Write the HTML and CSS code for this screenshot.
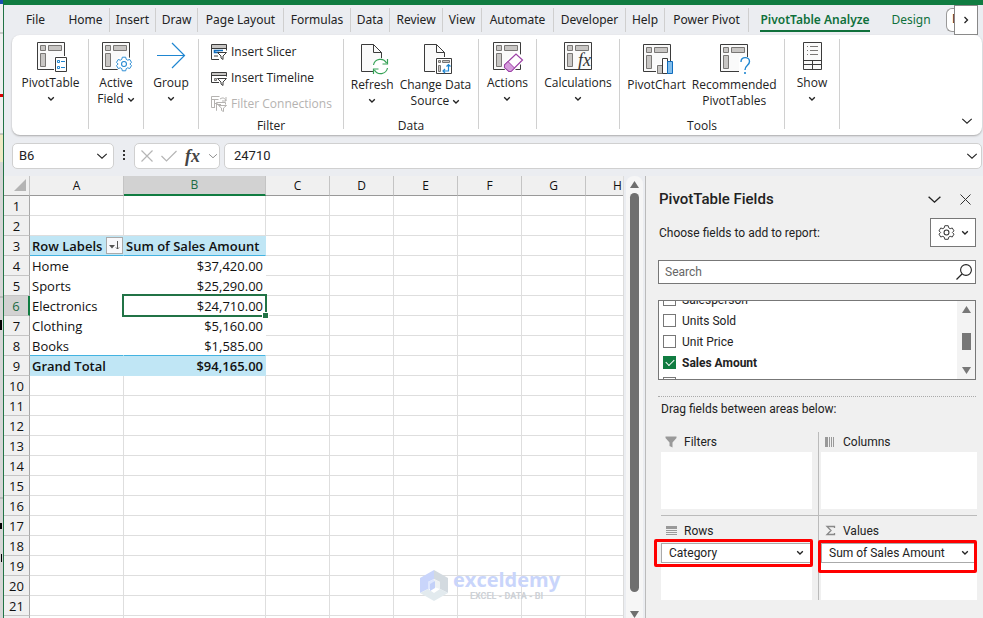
FILE: index.html
```html
<!doctype html>
<html lang="en">
<head>
<meta charset="utf-8">
<title>PivotTable Analyze</title>
<link rel="stylesheet" href="styles.css">
</head>

<body>
<!-- shared icons -->
<svg class="defs" width="0" height="0" aria-hidden="true">
	<symbol id="chev" viewBox="0 0 8 6"><path d="M1.2 1.2 4 4 6.800 1.200" fill="none" stroke="#222" stroke-width="1.300"/></symbol>
	<symbol id="chev-big" viewBox="0 0 14 8"><path d="M1.500 1.500 7 6.500 12.500 1.500" fill="none" stroke="currentColor" stroke-width="1.300"/></symbol>
	<symbol id="pivot" viewBox="0 0 32 32">
		<path d="M1.500 1.500h27v27h-27z" fill="#fafafa" stroke="#3b3b3b"/>
		<path d="M4.500 4.500h5v5h-5zM12.500 4.500h13v5h-13zM4.500 12.500h5v13h-5z" fill="#c8c6c4" stroke="#797775"/>
	</symbol>
	<symbol id="page" viewBox="0 0 32 32">
		<path d="M4.500 1.500h12l8 8v19h-20z" fill="#fafafa" stroke="#3b3b3b"/>
		<path d="M16.500 1.500v8h8" fill="none" stroke="#3b3b3b"/>
	</symbol>
	<symbol id="gear" viewBox="0 0 18 18">
		<path d="M7 1h4l.6 2.500 1.700 1 2.500-.8 2 3.400-1.900 1.900 1.900 1.900-2 3.400-2.500-.8-1.700 1L11 17H7l-.6-2.500-1.700-1-2.500.8-2-3.400L2.100 9 .2 7.100l2-3.400 2.500.8 1.700-1z" fill="#fff" stroke="currentColor" stroke-width="1.100" transform="translate(.9 .9) scale(.9)"/>
		<circle cx="9" cy="9" r="2.600" fill="none" stroke="currentColor" stroke-width="1.100"/>
	</symbol>
	<symbol id="funnel" viewBox="0 0 12 12"><path d="M.5.500h11v1.500L7.500 6.500v5l-3-1.500V6.500L.5 2z"/></symbol>
</svg>

<div class="screen">
	<!-- window behind -->
	<svg class="behind" width="3" height="618" viewBox="0 0 3 618" aria-hidden="true">
		<path d="M0 0h3v618H0z" fill="#d6d6d6"/>
		<path d="M0 4h3v130H0z" fill="#f0f0f0"/>
		<path d="M0 0h3v4H0z" fill="#1d4eb0"/>
		<path d="M0 94h3v3H0z" fill="#d90000"/>
		<path d="M0 134h3v28H0z" fill="#efe9c4"/>
		<path d="M0 33h3M0 134h3M0 297h3M0 498h3" stroke="#a0a0a0"/>
		<path d="M0 320h2v10H0zM0 523h2v6H0zM1 554h1v8H1z"/>
	</svg>

	<div class="app">
		<nav class="tabs">
			<a href="#" class="tab">File</a>
			<a href="#" class="tab line">Home</a>
			<a href="#" class="tab line">Insert</a>
			<a href="#" class="tab line">Draw</a>
			<a href="#" class="tab line">Page Layout</a>
			<a href="#" class="tab line">Formulas</a>
			<a href="#" class="tab line">Data</a>
			<a href="#" class="tab line">Review</a>
			<a href="#" class="tab line">View</a>
			<a href="#" class="tab line">Automate</a>
			<a href="#" class="tab line">Developer</a>
			<a href="#" class="tab line">Help</a>
			<a href="#" class="tab line">Power Pivot</a>
			<a href="#" class="tab active">PivotTable Analyze</a>
			<a href="#" class="tab green">Design</a>
			<div class="more">
				<span class="more-cut">D</span>
				<button class="more-btn" aria-label="Scroll tabs"><svg width="6" height="8" viewBox="0 0 6 8"><path d="M1.500 1 4.500 4l-3 3" fill="none" stroke="#222" stroke-width="1.300"/></svg></button>
			</div>
		</nav>

		<div class="ribbon">
			<div class="group">
				<button class="big">
					<svg width="32" height="32" viewBox="0 0 32 32"><use href="#pivot"/><path d="M18 15h14v17H18z" fill="#fff"/><path d="M19.500 16.500h11v14h-11z" fill="#fff" stroke="#3b3b3b"/><path d="M21.500 19.500h2v2h-2zM21.500 25.500h2v2h-2zM25 20.500h4M25 26.500h4" fill="none" stroke="#1f86d1"/></svg>
					<span>PivotTable</span>
					<svg class="chev"><use href="#chev"/></svg>
				</button>
			</div>
			<div class="group">
				<button class="big">
					<svg width="32" height="32" viewBox="0 0 32 32"><use href="#pivot"/><circle cx="23" cy="23" r="8.500" fill="#fff"/><use href="#gear" x="14.500" y="14.500" width="17" height="17" color="#1f86d1"/></svg>
					<span>Active<br>Field <svg class="chev"><use href="#chev"/></svg></span>
				</button>
			</div>
			<div class="group">
				<button class="big">
					<svg width="32" height="32" viewBox="0 0 32 32"><path d="M1 14.500h27M16 2l12.500 12.500L16 27" fill="none" stroke="#1f86d1" stroke-width="1.200"/></svg>
					<span>Group</span>
					<svg class="chev"><use href="#chev"/></svg>
				</button>
			</div>
			<div class="group filter">
				<button class="small">
					<svg width="16" height="16" viewBox="0 0 16 16"><path d="M.5.500h15v15H.5z" fill="#fff"/><path d="M8 15.500H.5V.5h15v6" fill="none" stroke="#3b3b3b"/><path d="M1 1h14v3H1z" fill="#c8c6c4"/><path d="M.5 4.500h15" stroke="#3b3b3b"/><path d="M12 6.500H3.500v2H8" fill="none" stroke="#0f6cbd" stroke-width="1.600"/><path d="M3 11h4v2H3z" fill="#a19f9d"/><path d="M6.500 8.500h9L12 12v3.500L10 14v-2z" fill="#fff" stroke="#3b3b3b"/></svg>
					Insert Slicer
				</button>
				<button class="small">
					<svg width="16" height="16" viewBox="0 0 16 16"><path d="M8 12.500H.5v-10h15v4" fill="#fff" stroke="#3b3b3b"/><path d="M1 3h14v2H1z" fill="#c8c6c4"/><path d="M.5 5.500h15" stroke="#3b3b3b"/><path d="M3.500 8.500h2v2h-2z" fill="#c8c6c4" stroke="#797775"/><path d="M6.500 8.500h9L12 12v3.500L10 14v-2z" fill="#fff" stroke="#3b3b3b"/></svg>
					Insert Timeline
				</button>
				<button class="small" disabled>
					<svg width="16" height="16" viewBox="0 0 16 16" fill="none" stroke="#b5b3b1"><path d="M4 11.500H.5v-11h8M.5 3.500h7M3.500 3.500v8M3.500 7.500h3M9 3c3-2 5-1 6 2M15 1v4h-4M6 14.500h-.5v-8h9v2M6 8.500h4"/><path d="M7.500 9.500h8L12.500 12v3.500l-2-1V12z" fill="#fff"/></svg>
					Filter Connections
				</button>
				<span class="caption">Filter</span>
			</div>
			<div class="group data">
				<button class="big">
					<svg width="32" height="32" viewBox="0 0 32 32"><use href="#page"/><circle cx="23.500" cy="23.500" r="8.500" fill="#fff"/><path d="M16.500 22a7 7 0 0 1 13-2M30.500 25a7 7 0 0 1-13 2M30.500 16v5h-5M16.500 31v-5h5" fill="none" stroke="#36a256" stroke-width="1.200"/></svg>
					<span>Refresh</span>
					<svg class="chev"><use href="#chev"/></svg>
				</button>
				<button class="big">
					<svg width="32" height="32" viewBox="0 0 32 32"><use href="#page"/><path d="M15 14h17v18H15z" fill="#fff"/><path d="M16.500 15.500h15v15h-15z" fill="#fff" stroke="#3b3b3b"/><path d="M18.500 17.500h2v2h-2zM22.500 17.500h7v2h-7zM18.500 22.500h2v6h-2z" fill="#c8c6c4" stroke="#797775"/><path d="M28.500 22v6H23M26.500 23.500l2-2 2 2M25 26l-2 2 2 2" fill="none" stroke="#1f86d1" stroke-width="1.200"/></svg>
					<span>Change Data<br>Source <svg class="chev"><use href="#chev"/></svg></span>
				</button>
				<span class="caption">Data</span>
			</div>
			<div class="group">
				<button class="big">
					<svg width="32" height="32" viewBox="0 0 32 32"><use href="#pivot"/><path d="m10 24 14-14 8 6v4L20 32h-5z" fill="#fff"/><path d="M12.500 24 24 13l6.500 6L19 30.500h-2l-4.500-4z" fill="#fff" stroke="#9b3fa5" stroke-width="1.200"/><path d="m12.500 24 3.500-3.500 6.500 6.500-3.500 3.500h-2l-4.500-4z" fill="#d59bdc" stroke="#9b3fa5"/></svg>
					<span>Actions</span>
					<svg class="chev"><use href="#chev"/></svg>
				</button>
			</div>
			<div class="group">
				<button class="big">
					<svg width="32" height="32" viewBox="0 0 32 32"><use href="#pivot"/><path d="M13 12h15v16H13z" fill="#fafafa"/><text x="15" y="25" class="fx">fx</text></svg>
					<span>Calculations</span>
					<svg class="chev"><use href="#chev"/></svg>
				</button>
			</div>
			<div class="group tools">
				<button class="big">
					<svg width="32" height="32" viewBox="0 0 32 32"><use href="#pivot"/><path d="M14 21h5v-6h7v3h6v14H14z" fill="#fff"/><path d="M15.500 22.500h5v8h-5z" fill="#c8c6c4" stroke="#797775"/><path d="M20.500 15.500h5v15h-5z" fill="#fff" stroke="#3b3b3b"/><path d="M25.500 18.500h5v12h-5z" fill="#83beec" stroke="#0f6cbd"/></svg>
					<span>PivotChart</span>
				</button>
				<button class="big">
					<svg width="32" height="32" viewBox="0 0 32 32"><use href="#pivot"/><path d="M20 14h12v18H20z" fill="#fff"/><path d="M22 19c0-6 8.500-5.500 8.500-.5 0 4-4.500 3.500-4.500 8.500" fill="none" stroke="#1f86d1" stroke-width="1.400"/><path d="M25.200 29h1.600v2h-1.600z" fill="#1f86d1"/></svg>
					<span>Recommended<br>PivotTables</span>
				</button>
				<span class="caption">Tools</span>
			</div>
			<div class="group">
				<button class="big">
					<svg width="32" height="32" viewBox="0 0 32 32"><path d="M6.500 1.500h18v27h-18z" fill="#fafafa" stroke="#3b3b3b"/><path d="M7 19.500h17M7 23.500h17M15.500 19.500v9" stroke="#3b3b3b"/><path d="M10 5.500h1M13 5.500h8M10 9.500h1M13 9.500h8M10 13.500h1M13 13.500h8" stroke="#797775"/></svg>
					<span>Show</span>
					<svg class="chev"><use href="#chev"/></svg>
				</button>
			</div>
			<button class="collapse" aria-label="Collapse ribbon"><svg width="12" height="8"><use href="#chev-big"/></svg></button>
		</div>

		<div class="formula-bar">
			<div class="box name-box">
				<input type="text" value="B6" aria-label="Name box">
				<svg width="12" height="8"><use href="#chev-big"/></svg>
			</div>
			<svg class="dots" width="2" height="11" viewBox="0 0 2 11"><path d="M0 0h2v2H0zM0 4h2v2H0zM0 8h2v2H0z" fill="#333"/></svg>
			<div class="box fx-box">
				<button aria-label="Cancel"><svg width="12" height="12" viewBox="0 0 12 12"><path d="m.5.500 11 11M11.500.500l-11 11" stroke="#b5b5b5" stroke-width="1.200"/></svg></button>
				<button aria-label="Enter"><svg width="16" height="12" viewBox="0 0 16 12"><path d="m.5 6 5 5 10-10" fill="none" stroke="#b5b5b5" stroke-width="1.200"/></svg></button>
				<button class="fx-btn">fx</button>
				<svg class="grey" width="10" height="6"><use href="#chev-big"/></svg>
			</div>
			<div class="box value-box">
				<input type="text" value="24710" aria-label="Formula bar">
				<svg width="12" height="8"><use href="#chev-big"/></svg>
			</div>
		</div>

		<div class="work">
			<div class="sheet">
				<table>
					<colgroup><col class="c-num"><col class="c-a"><col class="c-b"><col class="c-n"><col class="c-n"><col class="c-n"><col class="c-n"><col class="c-n"><col class="c-n"></colgroup>
					<thead>
						<tr><th><svg width="12" height="12" viewBox="0 0 12 12"><path d="M12 0v12H0z" fill="#b4b4b4"/></svg></th><th>A</th><th class="sel">B</th><th>C</th><th>D</th><th>E</th><th>F</th><th>G</th><th>H</th></tr>
					</thead>
					<tbody>
						<tr><th>1</th><td></td><td></td><td></td><td></td><td></td><td></td><td></td><td></td></tr>
						<tr><th>2</th><td></td><td></td><td></td><td></td><td></td><td></td><td></td><td></td></tr>
						<tr class="head"><th>3</th><td><div class="label">Row Labels <button class="sort" aria-label="Sort"><svg width="11" height="9" viewBox="0 0 11 9"><path d="M0 4h6L3 7.500z" fill="#555"/><path d="M8.500 0v8M7 6.500l1.500 1.500L10 6.500" fill="none" stroke="#555"/></svg></button></div></td><td>Sum of Sales Amount</td><td></td><td></td><td></td><td></td><td></td><td></td></tr>
						<tr class="item"><th>4</th><td>Home</td><td class="num">$37,420.00</td><td></td><td></td><td></td><td></td><td></td><td></td></tr>
						<tr class="item"><th>5</th><td>Sports</td><td class="num">$25,290.00</td><td></td><td></td><td></td><td></td><td></td><td></td></tr>
						<tr class="item"><th class="sel">6</th><td>Electronics</td><td class="num current">$24,710.00</td><td></td><td></td><td></td><td></td><td></td><td></td></tr>
						<tr class="item"><th>7</th><td>Clothing</td><td class="num">$5,160.00</td><td></td><td></td><td></td><td></td><td></td><td></td></tr>
						<tr class="item last"><th>8</th><td>Books</td><td class="num">$1,585.00</td><td></td><td></td><td></td><td></td><td></td><td></td></tr>
						<tr class="total"><th>9</th><td>Grand Total</td><td class="num">$94,165.00</td><td></td><td></td><td></td><td></td><td></td><td></td></tr>
						<tr><th>10</th><td></td><td></td><td></td><td></td><td></td><td></td><td></td><td></td></tr>
						<tr><th>11</th><td></td><td></td><td></td><td></td><td></td><td></td><td></td><td></td></tr>
						<tr><th>12</th><td></td><td></td><td></td><td></td><td></td><td></td><td></td><td></td></tr>
						<tr><th>13</th><td></td><td></td><td></td><td></td><td></td><td></td><td></td><td></td></tr>
						<tr><th>14</th><td></td><td></td><td></td><td></td><td></td><td></td><td></td><td></td></tr>
						<tr><th>15</th><td></td><td></td><td></td><td></td><td></td><td></td><td></td><td></td></tr>
						<tr><th>16</th><td></td><td></td><td></td><td></td><td></td><td></td><td></td><td></td></tr>
						<tr><th>17</th><td></td><td></td><td></td><td></td><td></td><td></td><td></td><td></td></tr>
						<tr><th>18</th><td></td><td></td><td></td><td></td><td></td><td></td><td></td><td></td></tr>
						<tr><th>19</th><td></td><td></td><td></td><td></td><td></td><td></td><td></td><td></td></tr>
						<tr><th>20</th><td></td><td></td><td></td><td></td><td></td><td></td><td></td><td></td></tr>
						<tr><th>21</th><td></td><td></td><td></td><td></td><td></td><td></td><td></td><td></td></tr>
						<tr><th></th><td></td><td></td><td></td><td></td><td></td><td></td><td></td><td></td></tr>
					</tbody>
				</table>
				<div class="watermark">
					<svg width="28" height="32" viewBox="0 0 28 32"><path d="M14 0 0 8v15l8-4v-7l6-3z" fill="#c9d5fb"/><path d="m14 0 14 8v15l-8-4v-7l-6-3z" fill="#d3dae0"/><path d="m0 23 8-4 6 4 6-4 8 4-14 8z" fill="#e2eaee"/><path d="m8 12 6-3v8l-6 3z" fill="#dfe7fd"/><path d="m14 9 6 3v7l-6-2z" fill="#eef1f3"/><path d="m10 14 5-3v7l-5 3z" fill="#c3d0f8"/></svg>
					<div class="mark-text"><b>exceldemy</b><small>EXCEL - DATA - BI</small></div>
				</div>
			</div>

			<div class="scroll">
				<svg width="9" height="7" viewBox="0 0 9 7"><path d="M4.500 0 9 7H0z" fill="#6f6f6f"/></svg>
				<div class="thumb"></div>
				<svg width="9" height="7" viewBox="0 0 9 7"><path d="M0 0h9L4.500 7z" fill="#6f6f6f"/></svg>
			</div>

			<aside class="pane">
				<div class="pane-head">
					<h2>PivotTable Fields</h2>
					<button aria-label="Pane options"><svg width="15" height="9"><use href="#chev-big"/></svg></button>
					<button aria-label="Close"><svg width="11" height="11" viewBox="0 0 11 11"><path d="m.5.500 10 10M10.500.500l-10 10" stroke="#333"/></svg></button>
				</div>
				<div class="choose">
					<span>Choose fields to add to report:</span>
					<button class="tool" aria-label="Tools"><svg class="gear" width="17" height="17"><use href="#gear"/></svg><svg class="chev"><use href="#chev"/></svg></button>
				</div>
				<div class="search">
					<input type="text" placeholder="Search" aria-label="Search fields">
					<svg width="16" height="16" viewBox="0 0 16 16"><circle cx="10" cy="6" r="5.400" fill="none" stroke="#222" stroke-width="1.100"/><path d="M6 10 .5 15.500" stroke="#222" stroke-width="1.300"/></svg>
				</div>
				<div class="fields">
					<div class="field-list">
						<label><input type="checkbox">Salesperson</label>
						<label><input type="checkbox">Units Sold</label>
						<label><input type="checkbox">Unit Price</label>
						<label><input type="checkbox" checked><b>Sales Amount</b></label>
						<label><input type="checkbox"></label>
					</div>
					<div class="list-scroll">
						<svg width="9" height="7" viewBox="0 0 9 7"><path d="M4.500 0 9 7H0z" fill="#777"/></svg>
						<div class="list-thumb"></div>
						<svg width="9" height="7" viewBox="0 0 9 7"><path d="M0 0h9L4.500 7z" fill="#777"/></svg>
					</div>
				</div>
				<p class="drag">Drag fields between areas below:</p>
				<div class="areas">
					<div class="area">
						<h3><svg width="12" height="12" fill="#999"><use href="#funnel"/></svg>Filters</h3>
						<div class="drop"></div>
					</div>
					<div class="area right">
						<h3><svg width="12" height="12" viewBox="0 0 12 12"><path d="M0 1h3v10H0zM4 1h1v10H4zM6 1h1v10H6zM8 1h1v10H8z" fill="#999"/></svg>Columns</h3>
						<div class="drop"></div>
					</div>
					<div class="area bottom">
						<h3><svg width="12" height="12" viewBox="0 0 12 12"><path d="M1 1h11v3H1zM1 5h11v1H1zM1 7h11v1H1zM1 9h11v1H1z" fill="#999"/></svg><label for="rows">Rows</label></h3>
						<div class="drop">
							<select id="rows"><option>Category</option></select>
							<svg class="chev"><use href="#chev"/></svg>
						</div>
						<div class="mark mark-rows"></div>
					</div>
					<div class="area right bottom">
						<h3><svg width="12" height="12" viewBox="0 0 12 12"><path d="M9.500 3V1.500H2L6 5.500 2 9.500h7.500V8" fill="none" stroke="#888" stroke-width="1.300"/></svg><label for="values">Values</label></h3>
						<div class="drop">
							<select id="values"><option>Sum of Sales Amount</option></select>
							<svg class="chev"><use href="#chev"/></svg>
						</div>
						<div class="mark mark-values"></div>
					</div>
				</div>
			</aside>
		</div>
	</div>
</div>
</body>
</html>
```
FILE: styles.css
```css
*{
	margin:0;
	padding:0;
	box-sizing:border-box;
}
body{
	height:100vh;
	overflow:hidden;
	font:12px/16px Roboto,"Open Sans",sans-serif;
	color:#222;
	background:#ebedf1;
}
button{
	border:0;
	background:none;
	font:inherit;
	color:inherit;
}
input,select{
	border:0;
	outline:0;
	font:inherit;
	color:inherit;
	background:none;
	min-width:0;
}
a{
	color:inherit;
	text-decoration:none;
}
svg{
	flex:none;
}
.defs{
	position:absolute;
}
.chev{
	width:8px;
	height:6px;
}
.screen{
	display:flex;
	height:100%;
}
.behind{
	flex:none;
}
.app{
	flex:1;
	min-width:0;
	display:flex;
	flex-direction:column;
	border-top:5px solid #107c41;
	border-left:1px solid #217346;
}

/* tabs */
.tabs{
	display:grid;
	grid-template-columns:53px 48px 46px 42px 86px 67px 39px 53px 39px 72px 72px 39px 84px 132px 60px 1fr;
	height:30px;
	flex:none;
	padding-left:5px;
	font-family:"Noto Sans","Open Sans",sans-serif;
}
.tab{
	display:flex;
	align-items:center;
	justify-content:center;
	height:24px;
	margin-top:3px;
	white-space:nowrap;
}
.line{
	border-right:1px solid #cfcfcf;
}
.active{
	justify-self:center;
	font-weight:600;
	color:#0f703b;
	border-bottom:2px solid #0f703b;
	padding-top:2px;
}
.green{
	color:#0f703b;
}
.more{
	display:flex;
	justify-content:flex-end;
	padding-right:5px;
}
.more-cut{
	width:8px;
	height:24px;
	margin-top:3px;
	padding-left:5px;
	border:1px solid #999;
	border-right:0;
	border-radius:6px 0 0 6px;
	background:#fff;
	line-height:20px;
	overflow:hidden;
}
.more-btn{
	width:24px;
	border:1px solid #888;
	background:#fff;
}

/* ribbon */
.ribbon{
	display:grid;
	grid-template-columns:76px 55px 55px 145px 135px 58px 83px 165px 55px 1fr;
	flex:none;
	height:100px;
	margin:0 1px 0 8px;
	padding:4px 0 6px 1px;
	border-radius:8px;
	background:#fff;
	box-shadow:0 1px 2px #aaa;
	font-family:"Open Sans","Noto Sans",sans-serif;
}
.group{
	display:flex;
	justify-content:center;
	align-items:flex-start;
	position:relative;
	border-right:1px solid #d0d0d0;
}
.big{
	display:flex;
	flex-direction:column;
	align-items:center;
	padding-top:2px;
	white-space:nowrap;
}
.big > svg:first-child{
	margin-left:2px;
}
.big > span{
	margin-top:2px;
}
.big > .chev{
	margin-top:5px;
}
.fx{
	font:italic 18px "Liberation Serif",serif;
	fill:#333;
}
.filter{
	flex-direction:column;
	justify-content:flex-start;
	padding-left:12px;
}
.small{
	display:flex;
	align-items:center;
	gap:4px;
	height:26px;
	white-space:nowrap;
}
.small:disabled{
	color:#b5b3b1;
}
.caption{
	position:absolute;
	left:0;
	right:0;
	bottom:-5px;
	text-align:center;
}
.data,.tools{
	gap:6px;
}
.data .big,.tools .big{
	padding-top:4px;
}
.collapse{
	justify-self:end;
	align-self:end;
	padding-right:9px;
}

/* formula bar */
.formula-bar{
	display:flex;
	align-items:center;
	height:41px;
	flex:none;
	padding-left:8px;
	padding-right:1px;
}
.box{
	display:flex;
	align-items:center;
	height:26px;
	border:1px solid #d0d0d0;
	border-radius:5px;
	background:#fff;
}
.name-box{
	width:102px;
	padding:0 5px 0 6px;
}
.name-box input,.value-box input{
	flex:1;
	font-size:13px;
}
.dots{
	margin:0 9px;
}
.fx-box{
	width:86px;
	margin-right:4px;
	padding:0 1px 0 6px;
	justify-content:space-between;
}
.fx-box button{
	display:flex;
}
.fx-box .fx-btn{
	font:italic bold 18px/20px "Liberation Serif",serif;
	color:#444;
}
.grey{
	color:#888;
}
.value-box{
	flex:1;
	padding:0 3px 0 9px;
}

/* sheet */
.work{
	flex:1;
	min-height:0;
	display:flex;
}
.sheet{
	flex:1;
	min-width:0;
	overflow:hidden;
	position:relative;
	background:#fff;
	border-right:1px solid #dcdcdc;
}
table{
	width:622px;
	table-layout:fixed;
	border-collapse:separate;
	border-spacing:0;
	font:13px/18px "Open Sans","Noto Sans",sans-serif;
	color:#111;
}
.c-num{
	width:26px;
}
.c-a{
	width:94px;
}
.c-b{
	width:142px;
}
.c-n{
	width:64px;
}
tr{
	height:20px;
}
th{
	font-weight:400;
	background:#f0f0f0;
	border-right:1px solid #a8a8a8;
	border-bottom:1px solid #c4c4c4;
}
thead th{
	font-size:12px;
	border-right-color:#c4c4c4;
	border-bottom-color:#999;
}
thead th:first-child{
	text-align:right;
	padding-right:3px;
	line-height:10px;
}
thead .sel{
	background:#d2d2d2;
	color:#1c6b43;
	border-bottom:2px solid #107c41;
}
tbody .sel{
	background:#d2d2d2;
	color:#1c6b43;
	border-right:2px solid #107c41;
}
td{
	padding:0 2px;
	white-space:nowrap;
	border-right:1px solid #dedede;
	border-bottom:1px solid #dedede;
}
.head td:nth-child(-n+3),.total td:nth-child(-n+3){
	background:#c0e6f5;
	font-weight:600;
	border-color:#c0e6f5;
}
.head td:nth-child(-n+3){
	border-bottom-color:#44b3e1;
}
.item td:nth-child(-n+3){
	border-color:#fff;
}
.last td:nth-child(-n+3){
	border-bottom-color:#44b3e1;
}
.label{
	display:flex;
	justify-content:space-between;
	align-items:center;
}
.sort{
	display:flex;
	align-items:center;
	justify-content:center;
	width:17px;
	height:17px;
	margin-right:-2px;
	border:1px solid #aaa;
	background:#f8f8fb;
}
.num{
	text-align:right;
}
.current{
	position:relative;
}
.current::before{
	content:"";
	position:absolute;
	inset:-2px;
	border:2px solid #217346;
}
.current::after{
	content:"";
	position:absolute;
	right:-3px;
	bottom:-3px;
	width:5px;
	height:5px;
	background:#217346;
	outline:1px solid #fff;
}
.watermark{
	position:absolute;
	left:416px;
	top:394px;
	display:flex;
	gap:5px;
}
.mark-text{
	text-align:center;
	color:#c9d5fb;
	font-family:"Open Sans","Noto Sans",sans-serif;
}
.mark-text b{
	display:block;
	font-size:20px;
	line-height:20px;
}
.mark-text small{
	display:block;
	font:bold 9px/12px Roboto,sans-serif;
	color:#cdd1d6;
}
.scroll{
	display:flex;
	flex-direction:column;
	align-items:center;
	gap:5px;
	width:17px;
	margin:0 2px;
	padding-top:5px;
	border-radius:8px 8px 0 0;
	background:#f6f6f6;
}
.thumb{
	width:9px;
	flex:1;
	margin-bottom:14px;
	border-radius:5px;
	background:#6f6f6f;
}

/* fields pane */
.pane{
	width:338px;
	flex:none;
	padding:13px 7px 0 12px;
	border-left:1px solid #bbb;
	background:#f0f0f0;
}
.pane-head{
	display:flex;
	align-items:center;
	height:20px;
	gap:18px;
	padding:0 5px 0 1px;
}
.pane-head button{
	display:flex;
}
h2{
	flex:1;
	font-size:15px;
	line-height:20px;
	font-weight:500;
}
.choose{
	display:flex;
	align-items:center;
	justify-content:space-between;
	margin-top:9px;
	padding-left:1px;
}
.tool{
	display:flex;
	align-items:center;
	justify-content:center;
	gap:6px;
	width:46px;
	height:29px;
	border:1px solid #777;
	background:#fff;
}
.gear{
	color:#333;
}
.search{
	display:flex;
	align-items:center;
	height:24px;
	margin-top:13px;
	padding:0 3px 0 6px;
	border:1px solid #777;
	background:#fff;
}
.search input{
	flex:1;
}
.search input::placeholder{
	color:#666;
}
.fields{
	display:flex;
	justify-content:space-between;
	height:80px;
	margin-top:16px;
	border:1px solid #777;
	background:#fff;
	overflow:hidden;
}
.field-list{
	margin-top:-12px;
	padding-left:4px;
}
.field-list label{
	display:flex;
	align-items:center;
	gap:6px;
	height:21px;
}
.field-list input{
	appearance:none;
	width:13px;
	height:13px;
	border:1px solid #777;
	background:#fff;
}
.field-list input:checked{
	border-color:#107c41;
	background:#107c41;
	position:relative;
}
.field-list input:checked::after{
	content:"";
	position:absolute;
	left:2px;
	top:2px;
	width:7px;
	height:4px;
	border:solid #fff;
	border-width:0 0 1px 1px;
	transform:rotate(-45deg);
}
.list-scroll{
	display:flex;
	flex-direction:column;
	align-items:center;
	justify-content:space-between;
	width:18px;
	padding:5px 0;
	background:#f3f3f3;
}
.list-thumb{
	width:9px;
	height:17px;
	margin-top:2px;
	background:#777;
}
.drag{
	margin-top:16px;
	padding:4px 3px;
	border-top:1px dotted #aaa;
}
.areas{
	display:grid;
	grid-template-columns:157px 1fr;
	margin:11px -1px 0 3px;
}
.area{
	position:relative;
	padding:0 6px 6px 0;
}
.right{
	padding:0 0 6px 2px;
	border-left:1px solid #bbb;
}
.bottom{
	padding-bottom:0;
	border-top:1px solid #bbb;
}
h3{
	display:flex;
	align-items:center;
	gap:7px;
	height:20px;
	padding-left:4px;
	font-size:12px;
	font-weight:400;
}
.right h3{
	gap:6px;
}
.bottom h3{
	height:27px;
	padding-top:3px;
}
.drop{
	position:relative;
	height:57px;
	background:#fff;
}
.drop select{
	display:block;
	appearance:none;
	width:100%;
	height:20px;
	padding:0 7px;
	border:1px solid #aaa;
}
.drop .chev{
	position:absolute;
	right:8px;
	top:7px;
}
/* red frames drawn over the two fields */
.mark{
	position:absolute;
	border:3px solid #f00;
	border-radius:2px;
	pointer-events:none;
}
.mark-rows{
	left:-7px;
	right:5px;
	top:23px;
	height:28px;
}
.mark-values{
	left:-1px;
	right:0;
	top:24px;
	height:33px;
}
```
